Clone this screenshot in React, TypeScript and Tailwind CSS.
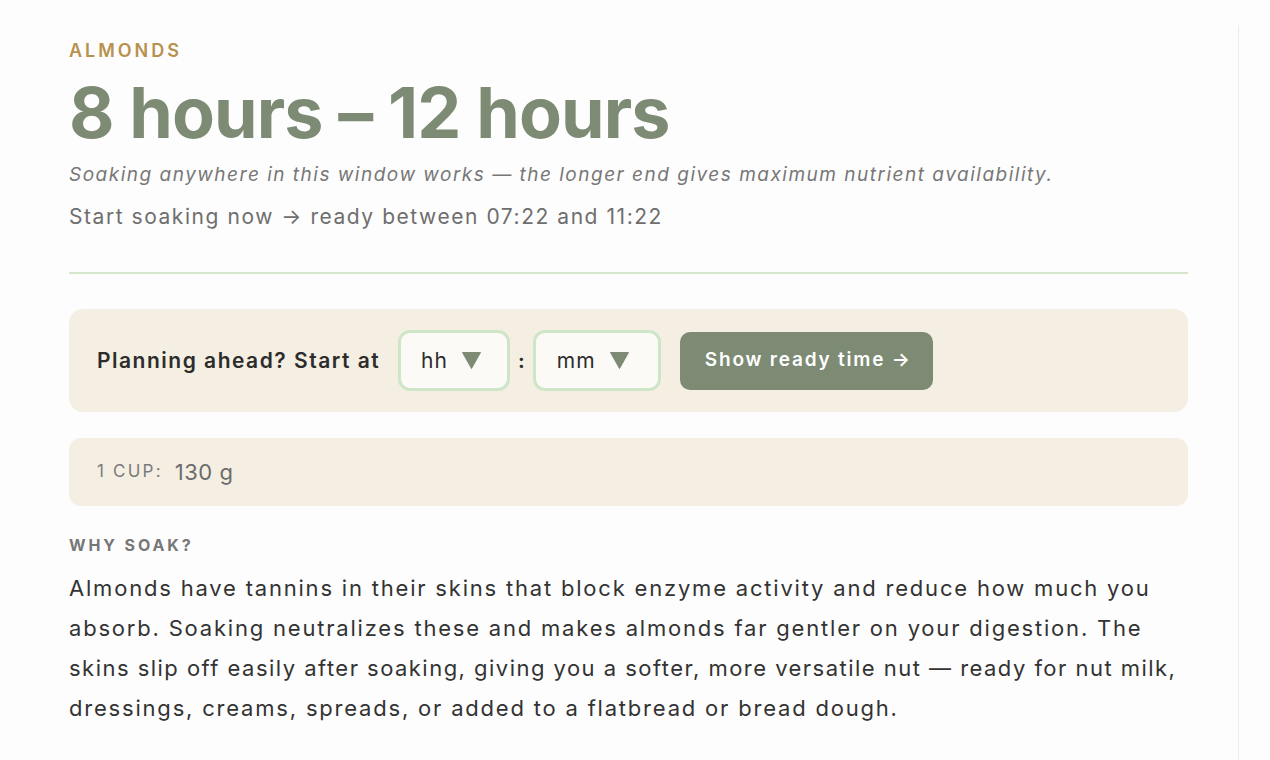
import React from "react";

function Caret() {
  return (
    <svg width="19" height="17" viewBox="0 0 19 17" className="shrink-0">
      <polygon points="0.5,0.5 18.5,0.5 9.5,16.5" fill="#7d8b74" stroke="#7d8b74" strokeLinejoin="round" strokeWidth="1" />
    </svg>
  );
}

export default function App() {
  return (
    <div className="min-h-[760px] bg-[#fdfdfd] flex font-['Inter',sans-serif]">
      <div className="w-[1239px] mt-[25px] h-[735px] border-r border-[#ececec] pl-[69px] pr-[50px] pt-[14px]">
        <div className="text-[18px] leading-[24px] font-semibold tracking-[0.165em] text-[#b8914f]">ALMONDS</div>
        <h1 className="mt-[15px] text-[70px] leading-[70px] font-bold tracking-[-0.9px] text-[#7d8b74]">8 hours – 12 hours</h1>
        <p className="mt-[13px] text-[19px] leading-[28px] italic tracking-[1.5px] text-[#777777]">
          Soaking anywhere in this window works — the longer end gives maximum nutrient availability.
        </p>
        <p className="mt-[13px] text-[21px] leading-[30px] tracking-[1.55px] text-[#6e6e6e]">
          Start soaking now → ready between 07:22 and 11:22
        </p>
        <div className="mt-[40px] h-[2px] bg-[#d5e6cd]" />

        <div className="mt-[35px] h-[103px] rounded-[14px] bg-[#f5efe3] px-[28px] flex items-center">
          <span className="text-[21px] font-semibold tracking-[1.5px] text-[#2c2c2c]">Planning ahead? Start at</span>
          <div className="ml-[18px] w-[112px] h-[61px] rounded-[12px] border-[3px] border-[#cfe5c8] bg-[#fbfaf7] flex items-center pl-[20px] gap-[14px]">
            <span className="text-[21px] tracking-[1px] text-[#2c2c2c]">hh</span>
            <Caret />
          </div>
          <span className="mx-[8px] text-[20px] font-bold text-[#2c2c2c]">:</span>
          <div className="w-[128px] h-[61px] rounded-[12px] border-[3px] border-[#cfe5c8] bg-[#fbfaf7] flex items-center pl-[21px] gap-[14px]">
            <span className="text-[21px] tracking-[1px] text-[#2c2c2c]">mm</span>
            <Caret />
          </div>
          <button className="ml-[19px] w-[253px] h-[58px] rounded-[10px] bg-[#7d8b74] pl-[25px] text-left text-[19px] font-semibold tracking-[1.8px] text-white">
            Show ready time →
          </button>
        </div>

        <div className="mt-[26px] h-[68px] rounded-[12px] bg-[#f5efe3] px-[28px] flex items-center gap-[12px]">
          <span className="text-[17px] tracking-[0.13em] text-[#7a7a7a]">1 CUP:</span>
          <span className="text-[22px] tracking-[0.5px] text-[#6b6b6b]">130 g</span>
        </div>

        <div className="mt-[29px] text-[16px] leading-[20px] font-bold tracking-[0.18em] text-[#777777]">WHY SOAK?</div>
        <p className="mt-[13px] text-[22px] leading-[40px] tracking-[1.8px] text-[#333333] whitespace-nowrap">
          Almonds have tannins in their skins that block enzyme activity and reduce how much you
          <br />
          absorb. Soaking neutralizes these and makes almonds far gentler on your digestion. The
          <br />
          <span className="tracking-[1.47px]">
            skins slip off easily after soaking, giving you a softer, more versatile nut — ready for nut milk,
          </span>
          <br />
          dressings, creams, spreads, or added to a flatbread or bread dough.
        </p>
      </div>
    </div>
  );
}
